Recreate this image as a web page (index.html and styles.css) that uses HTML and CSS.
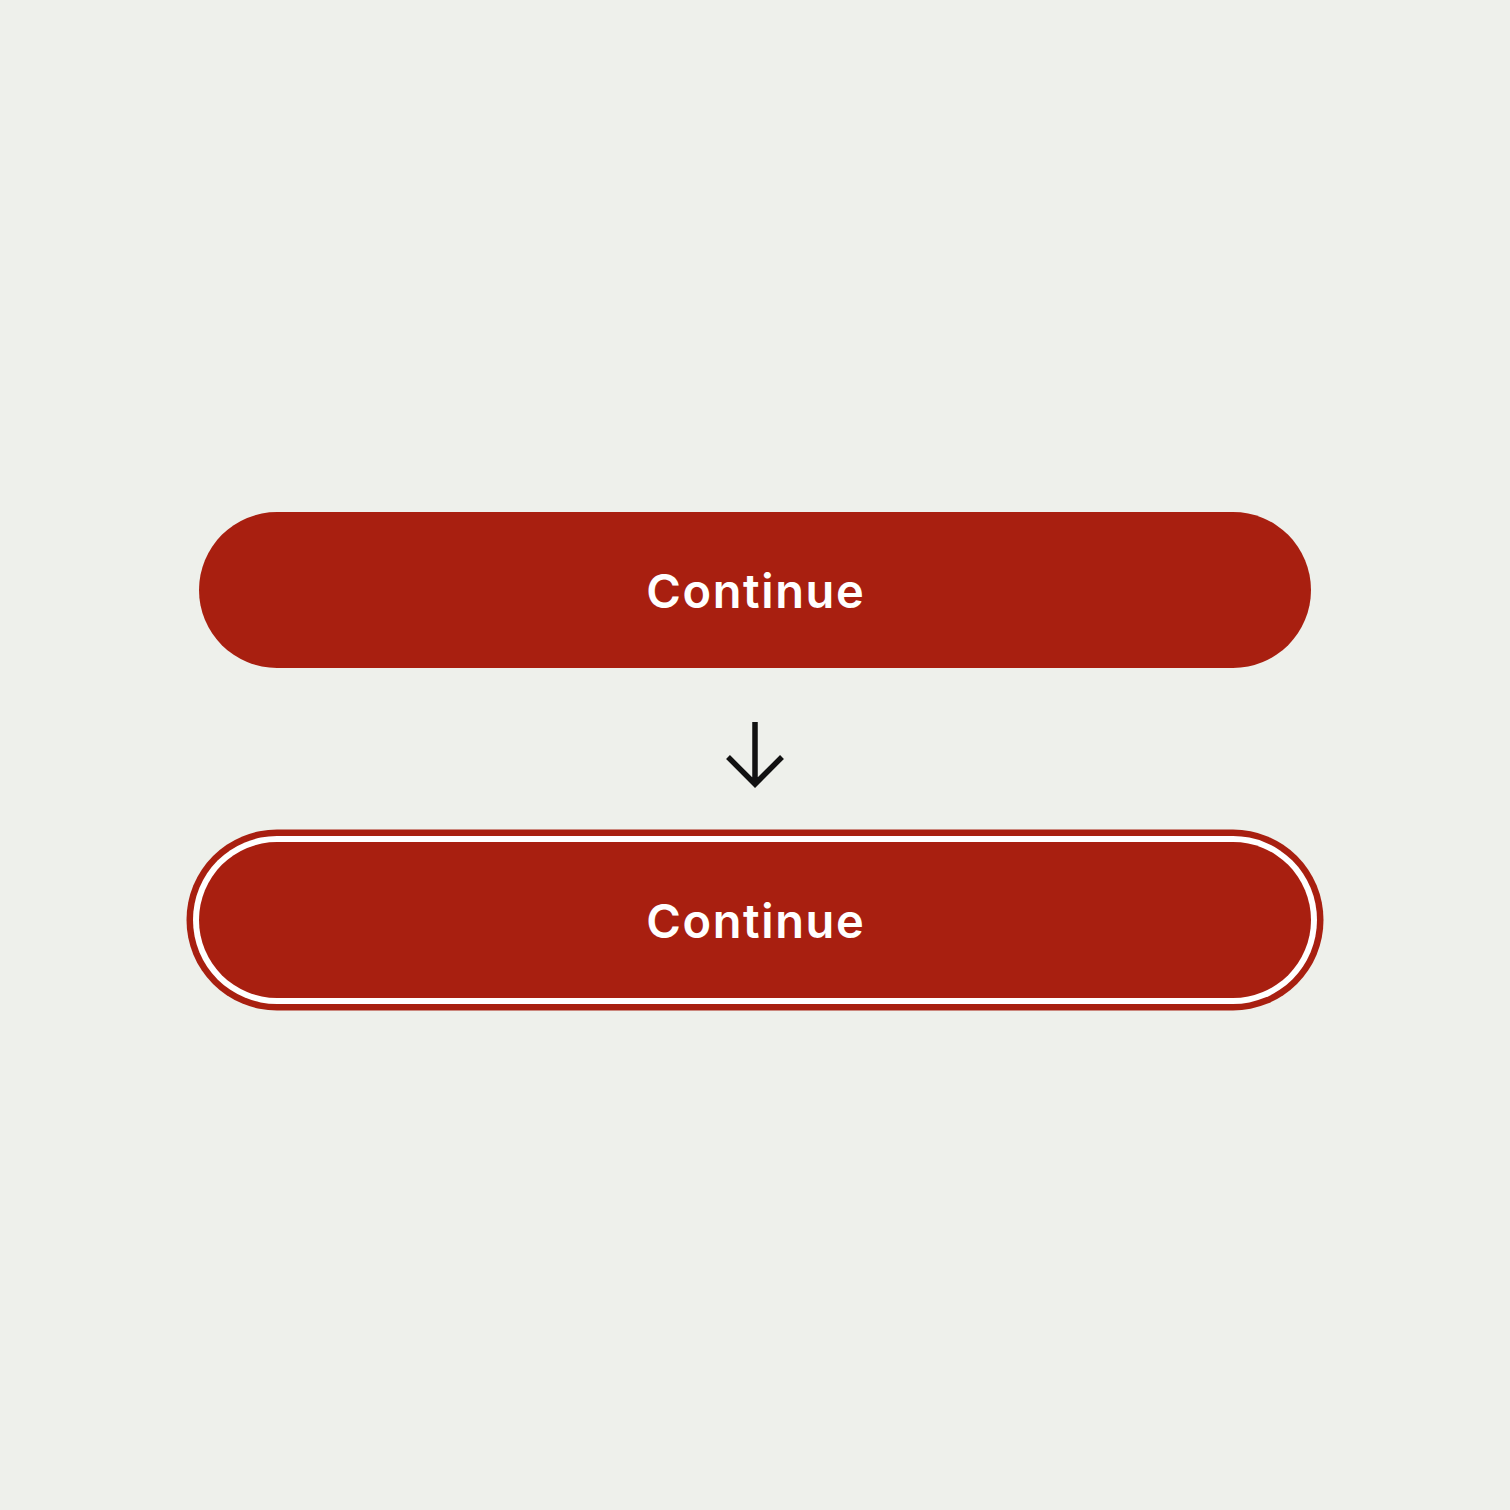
FILE: index.html
```html
<!DOCTYPE html>
<html lang="en">
<head>
    <meta charset="UTF-8">
    <meta name="viewport" content="width=device-width, initial-scale=1.0">
    <title>Button focus state</title>
    <link rel="stylesheet" href="styles.css">
</head>
<body>
    <div class="stack">
        <button class="btn">Continue</button>

        <svg class="arrow" width="58" height="66" viewBox="0 0 58 66">
            <path d="M29 0 V62 M2 35 L29 62 L56 35" fill="none" stroke="#111" stroke-width="5.5"/>
        </svg>

        <button class="btn btn-focus">Continue</button>
    </div>
</body>
</html>
```

FILE: styles.css
```css
html, body {
    height: 100%;
}
body {
    margin: 0;
    background-color: #eef0eb;
    font-family: Inter, "Noto Sans", sans-serif;
    display: flex;
    justify-content: center;
    align-items: center;
}
.stack {
    display: flex;
    flex-direction: column;
    align-items: center;
    gap: 54px;
}
.btn {
    width: 1112px;
    height: 156px;
    border: none;
    border-radius: 78px;
    background-color: #a81f10;
    color: #fff;
    font-family: inherit;
    font-size: 47px;
    font-weight: 600;
    letter-spacing: 1.6px;
    text-indent: 1.6px;
    cursor: pointer;
    padding: 0;
}
/* focused state: white gap, then a red ring */
.btn-focus {
    box-shadow: 0 0 0 6px #fff, 0 0 0 12.5px #a81f10;
}
.arrow {
    display: block;
}
```
